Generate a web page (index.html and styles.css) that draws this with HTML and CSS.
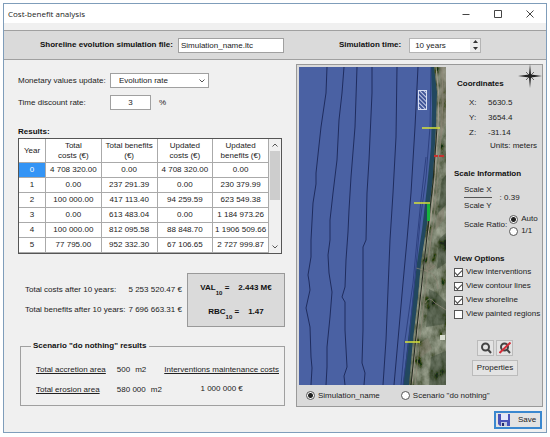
FILE: index.html
```html
<!DOCTYPE html>
<html lang="en">
<head>
    <meta charset="UTF-8">
    <meta name="viewport" content="width=device-width, initial-scale=1.0">
    <title>Cost-benefit analysis</title>
    <link rel="stylesheet" href="styles.css">
</head>
<body>
    <div class="window">
        <header class="titlebar">
            <h1>Cost-benefit analysis</h1>
            <div class="window-buttons">
                <button type="button" aria-label="Minimize">
                    <svg width="8" height="8" viewBox="0 0 8 8"><path d="M0.5 4.5h7"/></svg>
                </button>
                <button type="button" aria-label="Maximize">
                    <svg width="8" height="8" viewBox="0 0 8 8"><path d="M0.5 0.5h7v7h-7z"/></svg>
                </button>
                <button type="button" aria-label="Close">
                    <svg width="8" height="8" viewBox="0 0 8 8"><path d="M0.5 0.5l7 7M7.5 0.5l-7 7"/></svg>
                </button>
            </div>
        </header>

        <div class="file-bar">
            <div class="file-field">
                <label for="file">Shoreline evolution simulation file:</label>
                <input type="text" id="file" value="Simulation_name.ltc">
            </div>
            <div class="time-field">
                <label for="time">Simulation time:</label>
                <div class="spinner">
                    <input type="text" id="time" value="10 years">
                    <div class="spin-buttons">
                        <button type="button" aria-label="Up"><svg width="5" height="3" viewBox="0 0 5 3"><path d="M0 3L2.5 0L5 3z"/></svg></button>
                        <button type="button" aria-label="Down"><svg width="5" height="3" viewBox="0 0 5 3"><path d="M0 0L2.5 3L5 0z"/></svg></button>
                    </div>
                </div>
            </div>
        </div>

        <main class="content">
            <section class="analysis">
                <div class="settings">
                    <label for="update">Monetary values update:</label>
                    <div class="select-box">
                        <select id="update">
                            <option>Evolution rate</option>
                        </select>
                        <svg width="6" height="4" viewBox="0 0 6 4"><path d="M0.5 0.5L3 3L5.5 0.5"/></svg>
                    </div>
                    <label for="rate">Time discount rate:</label>
                    <div class="rate-field">
                        <input type="text" id="rate" value="3">
                        <span>%</span>
                    </div>
                </div>

                <h2>Results:</h2>
                <div class="results">
                    <table>
                        <thead>
                            <tr>
                                <th>Year</th>
                                <th>Total<br>costs (€)</th>
                                <th>Total benefits<br>(€)</th>
                                <th>Updated<br>costs (€)</th>
                                <th>Updated<br>benefits (€)</th>
                            </tr>
                        </thead>
                        <tbody>
                            <tr><td class="selected">0</td><td>4 708 320.00</td><td>0.00</td><td>4 708 320.00</td><td>0.00</td></tr>
                            <tr><td>1</td><td>0.00</td><td>237 291.39</td><td>0.00</td><td>230 379.99</td></tr>
                            <tr><td>2</td><td>100 000.00</td><td>417 113.40</td><td>94 259.59</td><td>623 549.38</td></tr>
                            <tr><td>3</td><td>0.00</td><td>613 483.04</td><td>0.00</td><td>1 184 973.26</td></tr>
                            <tr><td>4</td><td>100 000.00</td><td>812 095.58</td><td>88 848.70</td><td>1 1906 509.66</td></tr>
                            <tr><td>5</td><td>77 795.00</td><td>952 332.30</td><td>67 106.65</td><td>2 727 999.87</td></tr>
                        </tbody>
                    </table>
                    <div class="scrollbar">
                        <svg width="6" height="4" viewBox="0 0 6 4"><path d="M0.5 3.5L3 1L5.5 3.5"/></svg>
                        <div class="thumb"></div>
                        <svg width="6" height="4" viewBox="0 0 6 4"><path d="M0.5 0.5L3 3L5.5 0.5"/></svg>
                    </div>
                </div>

                <div class="summary">
                    <dl class="totals">
                        <dt>Total costs after 10 years:</dt><dd>5 253 520.47 €</dd>
                        <dt>Total benefits after 10 years:</dt><dd>7 696 663.31 €</dd>
                    </dl>
                    <div class="indicators">
                        <p><span>VAL<sub>10</sub> =</span><span>2.443 M€</span></p>
                        <p><span>RBC<sub>10</sub> =</span><span>1.47</span></p>
                    </div>
                </div>

                <fieldset class="scenario">
                    <legend>Scenario "do nothing" results</legend>
                    <dl class="areas">
                        <dt>Total accretion area</dt><dd><span>500</span><span>m2</span></dd>
                        <dt>Total erosion area</dt><dd><span>580 000</span><span>m2</span></dd>
                    </dl>
                    <dl class="maintenance">
                        <dt>Interventions maintenance costs</dt>
                        <dd>1 000 000 €</dd>
                    </dl>
                </fieldset>
            </section>

            <section class="viewer">
                <svg class="map" viewBox="0 0 147 318" preserveAspectRatio="none" role="img" aria-label="Shoreline map">
                    <defs>
                        <pattern id="hatch" width="3" height="3" patternUnits="userSpaceOnUse" patternTransform="rotate(45)">
                            <rect width="3" height="3" fill="#3f5497"/>
                            <path d="M0 0.5H3" stroke="#c5cde8" stroke-width="1"/>
                        </pattern>
                        <filter id="terrain" x="0" y="0" width="1" height="1">
                            <feTurbulence type="fractalNoise" baseFrequency="0.12 0.07" numOctaves="4" seed="8"/>
                            <feColorMatrix values="0.9 0 0 0 -0.2  0.9 0 0 0 -0.17  0.8 0 0 0 -0.21  0 0 0 0 0.7"/>
                            <feComposite in2="SourceGraphic" operator="in"/>
                        </filter>
                    </defs>
                    <rect width="147" height="318" fill="#4a61a3"/>
                    <path fill="#22485f" d="M132 0L133 40L132 80L128 120L123 163L118 196L114 230L109 273L104 318H147V0z"/>
                    <path fill="#3f4a3b" d="M135 0L138 25L137 60L134 110L130 145L127 163L122 196L119 230L114 273L110 318H147V0z"/>
                    <path fill="#4e594a" filter="url(#terrain)" d="M135 0L138 25L137 60L134 110L130 145L127 163L122 196L119 230L114 273L110 318H147V0z"/>
                    <path fill="#2c3c2b" opacity="0.4" d="M143 112l4-4v30l-8 8zM140 172l7-6v30l-9 6zM130 222l8 4 9 9v22l-20 3zM132 290l15-6v34h-17z"/>
                    <path fill="#8b8173" opacity="0.4" d="M141 0h6v55l-6 20zM138 148l7-8v12l-9 12zM127 200l5-5 5 5-5 4zM121 276l8-5 4 11-12 9z"/>
                    <path class="road" d="M137 0L140 30L139 60L136 110L132 150L127 180L124 210L120 250L116 285L113 318"/>
                    <path class="track" d="M143 0L144 35L142 70L138 120L134 160L127 204M117 201L128 204L136 198M126 204Q138 205 139 222M126 236Q130 228 136 236L147 243M133 160L129 200L121 270L116 318"/>
                    <path class="road dark" d="M138 60L134 115L129 160L123 215L118 260L112 318"/>
                    <g class="contours">
                        <path d="M28 0L27 26L22 60L17 106L17 117L14 136L12 173L12 190L9 208L10 214L11 223L7 241L11 260L12 290L13 301L12 318"/>
                        <path d="M45 0L43 26L40 53L38 93L34 126L31 153L31 173L29 188L30 206L33 225L31 250L28 280L28 300L27 318"/>
                        <path d="M58 0L56 60L52 110L50 143L49 165L47 193L46 220L43 230L46 235L46 263L48 300L45 309L46 318"/>
                        <path d="M73 0L73 26L70 93L68 126L67 173L64 180L64 263L63 296L66 306L65 318"/>
                        <path d="M98 0L97 70L94 126L91 173L89 223L87 273L84 318"/>
                        <path d="M119 0L116 60L112 126L108 173L104 216L99 273L95 318"/>
                        <path class="faint" d="M132 0L131 60L127 110L121 155L117 200L110 273L104 318"/>
                        <path class="faint" d="M127 90L122 133L118 173L114 216L106 273L102 318"/>
                    </g>
                    <rect x="119.5" y="23.5" width="8" height="19" fill="url(#hatch)" stroke="#d5dcf0"/>
                    <path stroke="#d7e23a" stroke-width="1.5" d="M123 61h18M115 136h16M106 275h15"/>
                    <path stroke="#c8312f" stroke-width="2" d="M135 89h4M140 89h5"/>
                    <path stroke="#17b33d" stroke-width="3" d="M129.5 137v17"/>
                    <rect x="141" y="268" width="5" height="5" fill="#d8dcd0"/>
                </svg>

                <aside class="tools">
                    <svg class="compass" width="24" height="24" viewBox="0 0 24 24">
                        <path stroke="#666" d="M8 8L16 16M16 8L8 16"/>
                        <path fill="#222" d="M12 0L13 10.5L24 12L13 13.5L12 24L11 13.5L0 12L11 10.5z"/>
                    </svg>
                    <section class="coordinates">
                        <h2>Coordinates</h2>
                        <dl>
                            <dt>X:</dt><dd>5630.5</dd>
                            <dt>Y:</dt><dd>3654.4</dd>
                            <dt>Z:</dt><dd>-31.14</dd>
                        </dl>
                        <p>Units: meters</p>
                    </section>
                    <section class="scale">
                        <h2>Scale Information</h2>
                        <div class="ratio">
                            <div class="fraction"><span>Scale X</span><span>Scale Y</span></div>
                            <span>: 0.39</span>
                        </div>
                        <div class="ratio-choice">
                            <span>Scale Ratio:</span>
                            <div>
                                <label><input type="radio" name="ratio" checked>Auto</label>
                                <label><input type="radio" name="ratio">1/1</label>
                            </div>
                        </div>
                    </section>
                    <section class="options">
                        <h2>View Options</h2>
                        <label><input type="checkbox" checked>View Interventions</label>
                        <label><input type="checkbox" checked>View contour lines</label>
                        <label><input type="checkbox" checked>View shoreline</label>
                        <label><input type="checkbox">View painted regions</label>
                    </section>
                    <div class="actions">
                        <div class="zoom-buttons">
                            <button type="button" class="icon-button" aria-label="Zoom">
                                <svg width="12" height="12" viewBox="0 0 12 12"><circle cx="5.5" cy="5" r="3.5"/><path d="M8 7.5L11 11"/></svg>
                            </button>
                            <button type="button" class="icon-button" aria-label="Reset zoom">
                                <svg width="12" height="12" viewBox="0 0 12 12"><circle cx="5.5" cy="5" r="3.5"/><path d="M8 7.5L11 11"/><path class="strike" d="M0.5 11L11.5 0.5"/></svg>
                            </button>
                        </div>
                        <button type="button" class="properties">Properties</button>
                    </div>
                </aside>

                <div class="scenario-choice">
                    <label><input type="radio" name="scenario" checked>Simulation_name</label>
                    <label><input type="radio" name="scenario">Scenario "do nothing"</label>
                </div>
            </section>
        </main>

        <footer>
            <button type="button" class="save">
                <svg width="12" height="12" viewBox="0 0 12 12">
                    <path fill="#4a52b8" d="M0 0H12V12H2L0 10z"/>
                    <path fill="#e4e8fa" d="M3 0H10V6H3z"/>
                    <path fill="#c5cae0" d="M3 8H9V12H3z"/>
                    <path fill="#23286e" d="M4 9H6V12H4z"/>
                </svg>
                Save
            </button>
        </footer>
    </div>
</body>
</html>
```

FILE: styles.css
```css
* {
    box-sizing: border-box;
}
body {
    margin: 0;
    padding: 3px 3px 4px;
    background-color: #fff;
    color: #222;
    font-family: "Liberation Sans", Arial, sans-serif;
    font-size: 8px;
    line-height: 12px;
}
h1, h2, p, dl, dd {
    margin: 0;
}
h2 {
    font-size: 8px;
    line-height: 12px;
}
h2, legend, .file-bar label, .indicators {
    color: #111;
    font-weight: bold;
}
input, select, button {
    margin: 0;
    color: #222;
    font-family: inherit;
    font-size: 8px;
    line-height: 10px;
}
button {
    padding: 0;
    border: 1px solid #bbb;
    background-color: #e3e3e3;
}
svg {
    display: block;
    fill: none;
}
.window {
    border: 1px solid #7f9dba;
    background-color: #f0f0f0;
}
.titlebar {
    display: flex;
    justify-content: space-between;
    align-items: center;
    height: 19px;
    padding: 0 12px 0 4px;
    background-color: #fff;
}
.titlebar h1 {
    font-family: "Open Sans", "Noto Sans", sans-serif;
    font-size: 8px;
    font-weight: normal;
}
.window-buttons {
    display: flex;
    gap: 24px;
}
.window-buttons button {
    border: none;
    background: none;
}
.window-buttons svg {
    stroke: #444;
}
.file-bar {
    display: flex;
    align-items: center;
    gap: 55px;
    height: 30px;
    margin-top: 7px;
    padding-left: 36px;
    border: solid #a0a0a0;
    border-width: 1px 0;
    background-color: #dadada;
}
.file-field, .time-field {
    display: flex;
    align-items: center;
    gap: 5px;
}
.time-field {
    gap: 8px;
}
input[type="text"], select {
    height: 15px;
    padding: 0 2px;
    border: 1px solid #a0a0a0;
    border-radius: 0;
    background-color: #fff;
}
#file {
    width: 106px;
}
.spinner {
    display: flex;
    width: 72px;
    height: 15px;
    border: 1px solid #b4b4b4;
    background-color: #fff;
}
.spinner input[type="text"] {
    flex: 1;
    min-width: 0;
    height: 13px;
    padding-left: 5px;
    border: none;
}
.spin-buttons {
    display: grid;
    width: 10px;
}
.spin-buttons button {
    display: grid;
    place-items: center;
    border: none;
    background-color: #ececec;
}
.spin-buttons svg {
    fill: #333;
}
.content {
    display: grid;
    grid-template-columns: minmax(0, 1fr) 247px;
    gap: 11px;
    padding: 4px 3px 0 14px;
}
.settings {
    display: grid;
    grid-template-columns: 92px 99px;
    align-items: center;
    row-gap: 7px;
    margin: 9px 0 16px;
}
.select-box {
    position: relative;
}
.select-box select {
    display: block;
    width: 100%;
    padding-left: 8px;
    appearance: none;
}
.select-box svg {
    position: absolute;
    top: 6px;
    right: 4px;
    pointer-events: none;
}
.select-box svg, .scrollbar svg {
    stroke: #555;
}
.rate-field {
    display: flex;
    align-items: center;
    gap: 8px;
}
.rate-field input {
    width: 41px;
    text-align: center;
}
.results {
    display: flex;
    height: 116px;
    margin-right: 3px;
    overflow: hidden;
    border: 1px solid #555;
    background-color: #fff;
}
.results table {
    width: 100%;
    border-spacing: 0;
    table-layout: fixed;
    text-align: center;
}
th, td {
    height: 15px;
    padding: 0;
    border: solid #aaa;
    border-width: 0 1px 1px 0;
    line-height: 10px;
    white-space: nowrap;
}
th {
    height: 24px;
    font-weight: normal;
}
th:first-child {
    width: 27px;
}
.selected {
    background-color: #3394f5;
    color: #fff;
}
.scrollbar {
    display: flex;
    flex: none;
    flex-direction: column;
    align-items: center;
    width: 12px;
    padding: 4px 0;
    background-color: #f0f0f0;
}
.thumb {
    width: 10px;
    height: 49px;
    margin: 4px 0 auto;
    background-color: #cdcdcd;
}
.summary {
    display: flex;
    justify-content: space-between;
    align-items: center;
    margin-top: 19px;
}
.totals {
    display: grid;
    grid-template-columns: auto auto;
    gap: 8px 3px;
    padding-left: 7px;
}
.indicators {
    display: grid;
    gap: 12px;
    width: 98px;
    padding: 8px 0;
    border: 1px solid #999;
    background-color: #dadada;
}
.indicators p {
    display: flex;
    justify-content: center;
    gap: 9px;
}
.indicators sub {
    font-size: 6px;
    line-height: 0;
    vertical-align: -5px;
}
.scenario {
    display: flex;
    justify-content: space-between;
    min-width: 0;
    margin: 13px 0 0 2px;
    padding: 12px 5px 9px 15px;
    border: 1px solid #a0a0a0;
    white-space: nowrap;
}
.scenario legend {
    margin-left: -5px;
    padding: 0 3px 0 2px;
}
.areas {
    display: grid;
    grid-template-columns: auto auto;
    gap: 8px 11px;
}
.areas dt, .maintenance dt {
    text-decoration: underline;
}
.areas dd {
    display: flex;
    gap: 5px;
}
.maintenance {
    display: grid;
    align-content: start;
    gap: 7px;
    text-align: center;
}
.viewer {
    display: grid;
    grid-template-columns: 147px 1fr;
    padding: 2px 0 0 2px;
    border: 1px solid #999;
    background-color: #dadada;
}
.map {
    width: 100%;
    height: 318px;
}
.contours {
    stroke: #1f2c5e;
}
.contours .faint {
    stroke: #2e4180;
}
.road {
    stroke: #a79e90;
}
.road.dark {
    stroke: #22291f;
}
.track {
    stroke: #8e8878;
    opacity: 0.7;
}
.tools {
    position: relative;
    padding: 11px 4px 0 8px;
}
.compass {
    position: absolute;
    top: -3px;
    right: 2px;
}
.coordinates h2 {
    padding-left: 3px;
}
.coordinates dl {
    display: grid;
    grid-template-columns: 19px auto;
    margin-top: 5px;
    padding-left: 15px;
    line-height: 15px;
}
.coordinates p {
    padding-right: 3px;
    text-align: right;
}
.scale {
    margin-top: 16px;
}
.ratio {
    display: flex;
    align-items: center;
    gap: 8px;
    margin-top: 4px;
    padding-left: 10px;
}
.fraction {
    display: grid;
    text-align: center;
}
.fraction span:first-child {
    padding-bottom: 1px;
    border-bottom: 1px solid #555;
}
.fraction span:last-child {
    padding-top: 2px;
}
.ratio-choice {
    display: flex;
    align-items: center;
    gap: 2px;
    margin-top: 1px;
    padding-left: 10px;
    white-space: nowrap;
}
.tools label, .scenario-choice label {
    display: flex;
    align-items: center;
    gap: 3px;
    white-space: nowrap;
}
.options {
    margin-top: 16px;
}
.options label {
    height: 14px;
}
input[type="radio"], input[type="checkbox"] {
    flex: none;
    width: 9px;
    height: 9px;
    border: 1px solid #555;
    background-color: #fff;
    appearance: none;
}
input[type="radio"] {
    border-radius: 50%;
}
input[type="radio"]:checked {
    background-image: radial-gradient(circle, #222 2px, transparent 3px);
}
input[type="checkbox"]:checked {
    display: grid;
    place-items: center;
}
input[type="checkbox"]:checked::before {
    content: "";
    width: 6px;
    height: 3px;
    border: solid #444;
    border-width: 0 0 1px 1px;
    transform: rotate(-45deg);
}
.actions {
    display: grid;
    justify-items: center;
    gap: 4px;
    margin-top: 19px;
    padding-right: 4px;
}
.zoom-buttons {
    display: flex;
    gap: 2px;
}
.icon-button {
    display: grid;
    place-items: center;
    width: 17px;
    height: 16px;
}
.icon-button svg {
    stroke: #444;
    stroke-width: 2;
}
.icon-button .strike {
    stroke: #d32f3a;
}
.properties {
    width: 46px;
    height: 16px;
}
.scenario-choice {
    display: flex;
    grid-column: 1 / -1;
    align-items: center;
    gap: 21px;
    height: 21px;
    padding-left: 7px;
}
footer {
    display: flex;
    justify-content: flex-end;
    padding: 4px 4px 3px;
}
.save {
    display: flex;
    align-items: center;
    gap: 8px;
    width: 48px;
    height: 18px;
    padding-left: 2px;
    border: 2px solid #3b88cf;
}
```
